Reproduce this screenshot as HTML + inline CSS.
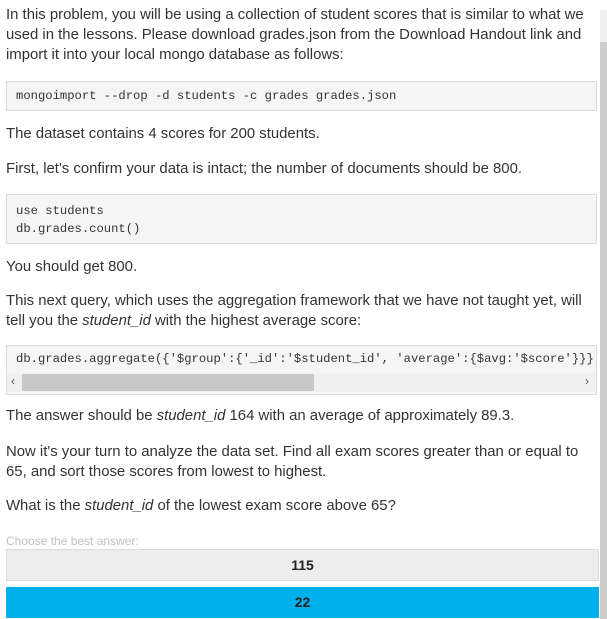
<!DOCTYPE html>
<html><head><style>
html,body{margin:0;padding:0;background:#fff;width:607px;height:619px;overflow:hidden;position:relative}
body{font-family:"Liberation Sans",sans-serif;font-size:14.9px;color:#333}
.t{position:absolute;left:6px;width:592px;line-height:20px;white-space:nowrap}
.c{position:absolute;left:6px;width:591px;background:#f5f5f5;border:1px solid #dcdcdc;font-family:"Liberation Mono",monospace;font-size:12.2px;color:#333;overflow:hidden;white-space:pre;box-sizing:border-box}
.btn{position:absolute;left:6px;width:593px;box-sizing:border-box;text-align:center;font-weight:bold;font-size:14px;color:#222}
</style></head><body>
<div class="t" style="top:5px">In this problem, you will be using a collection of student scores that is similar to what we<br>used in the lessons. Please download grades.json from the Download Handout link and<br>import it into your local mongo database as follows:</div>
<div class="c" style="top:81px;height:30px;padding:7px 0 0 9px">mongoimport --drop -d students -c grades grades.json</div>
<div class="t" style="top:124px">The dataset contains 4 scores for 200 students.</div>
<div class="t" style="top:159px">First, let's confirm your data is intact; the number of documents should be 800.</div>
<div class="c" style="top:194px;height:50px;padding:7px 0 0 9px;line-height:18px">use students
db.grades.count()</div>
<div class="t" style="top:257px">You should get 800.</div>
<div class="t" style="top:291px">This next query, which uses the aggregation framework that we have not taught yet, will<br>tell you the <i>student_id</i> with the highest average score:</div>
<div class="c" style="top:345px;height:50px;padding:6px 0 0 9px">db.grades.aggregate({'$group':{'_id':'$student_id', 'average':{$avg:'$score'}}})
<div style="position:absolute;left:0;top:27px;width:591px;height:19px;background:#f0f0f0"></div>
<div style="position:absolute;left:15px;top:28px;width:292px;height:17px;background:#c8c8c8"></div>
<div style="position:absolute;left:4px;top:28px;font-family:'Liberation Sans';font-size:12px;color:#555">&lsaquo;</div>
<div style="position:absolute;left:578px;top:28px;font-family:'Liberation Sans';font-size:12px;color:#555">&rsaquo;</div></div>
<div class="t" style="top:406px">The answer should be <i>student_id</i> 164 with an average of approximately 89.3.</div>
<div class="t" style="top:442px">Now it's your turn to analyze the data set. Find all exam scores greater than or equal to<br>65, and sort those scores from lowest to highest.</div>
<div class="t" style="top:496px">What is the <i>student_id</i> of the lowest exam score above 65?</div>
<div class="t" style="top:531px;font-size:12px;color:#c0c0c0">Choose the best answer:</div>
<div class="btn" style="top:549px;height:32px;line-height:30px;background:#ededed;border:1px solid #dcdcdc">115</div>
<div class="btn" style="top:587px;height:31px;line-height:31px;background:#00b0ed">22</div>
<div style="position:absolute;left:600px;top:10px;width:7px;height:609px;background:#f0f0f0"></div>
<div style="position:absolute;left:600px;top:42px;width:7px;height:577px;background:#cdcdcd"></div>
</body></html>
